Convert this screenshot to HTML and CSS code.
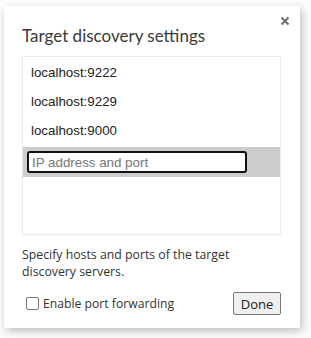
FILE: index.html
```
<!DOCTYPE html>
<html>
<head>
<meta charset="utf-8">
<link rel="stylesheet" href="styles.css">
</head>
<body>
<div class="dialog">
  <button class="close" aria-label="Close">
    <svg width="10" height="10" viewBox="0 0 10 10"><path d="M1.5 1.5 L8.5 8.5 M8.5 1.5 L1.5 8.5" stroke="#6e6e6e" stroke-width="2" fill="none"/></svg>
  </button>
  <div class="title">Target discovery settings</div>
  <div class="list">
    <div class="item">localhost:9222</div>
    <div class="item">localhost:9229</div>
    <div class="item">localhost:9000</div>
    <div class="item editing"><input class="field" type="text" placeholder="IP address and port"></div>
  </div>
  <div class="help">Specify hosts and ports of the target discovery servers.</div>
  <div class="footer">
    <label class="check"><span class="box"></span>Enable port forwarding</label>
    <button class="done">Done</button>
  </div>
</div>
</body>
</html>
```
FILE: styles.css
```
html, body {
  margin: 0;
  padding: 0;
  background: #fcfcfc;
}
body {
  padding: 6px 11px 10px 4px;
  width: 311px;
  height: 338px;
  box-sizing: border-box;
}
.dialog {
  position: relative;
  width: 296px;
  height: 322px;
  background: #fff;
  border-radius: 2px;
  box-shadow: 2px 3px 9px rgba(0,0,0,0.25);
  box-sizing: border-box;
  padding: 18px 19px 0 18px;
  font-family: "Open Sans", sans-serif;
  color: #333;
}
.close {
  position: absolute;
  top: 8px;
  right: 8px;
  width: 14px;
  height: 14px;
  border: 0;
  background: transparent;
  padding: 0;
  display: flex;
  align-items: center;
  justify-content: center;
}
.title {
  font-family: Lato, "Open Sans", sans-serif;
  font-size: 17px;
  line-height: 24px;
  color: #3a3a3a;
  margin-bottom: 8px;
}
.list {
  border: 1px solid #ebebeb;
  height: 179px;
  box-sizing: border-box;
  padding-top: 1px;
  font-family: "Liberation Sans", Arial, sans-serif;
  font-size: 13.33px;
  color: #222;
}
.item {
  height: 29px;
  line-height: 29px;
  padding-left: 8px;
}
.item.editing {
  margin-top: 2px;
  height: 30px;
  background: #cccccc;
  padding-left: 4px;
  display: flex;
  align-items: center;
}
.field {
  width: 220px;
  height: 22px;
  box-sizing: border-box;
  border: 2px solid #111;
  border-radius: 3px;
  background: #fff;
  font-family: "Liberation Sans", Arial, sans-serif;
  font-size: 13.33px;
  padding: 0 3px;
  outline: none;
}
.field::placeholder {
  color: #777;
}
.help {
  margin-top: 11px;
  font-size: 12.3px;
  line-height: 17px;
  color: #333;
  padding-right: 40px;
}
.footer {
  margin-top: 12px;
  display: flex;
  justify-content: space-between;
  align-items: center;
}
.check {
  display: flex;
  align-items: center;
  font-size: 12.2px;
  color: #333;
  padding-left: 4px;
}
.box {
  width: 11px;
  height: 11px;
  border: 1px solid #767676;
  border-radius: 2px;
  margin-right: 4px;
}
.done {
  height: 23px;
  width: 48px;
  padding: 0;
  border: 1px solid #767676;
  border-radius: 2px;
  background: #efefef;
  font-family: "Open Sans", sans-serif;
  font-size: 13px;
  color: #222;
}
```
